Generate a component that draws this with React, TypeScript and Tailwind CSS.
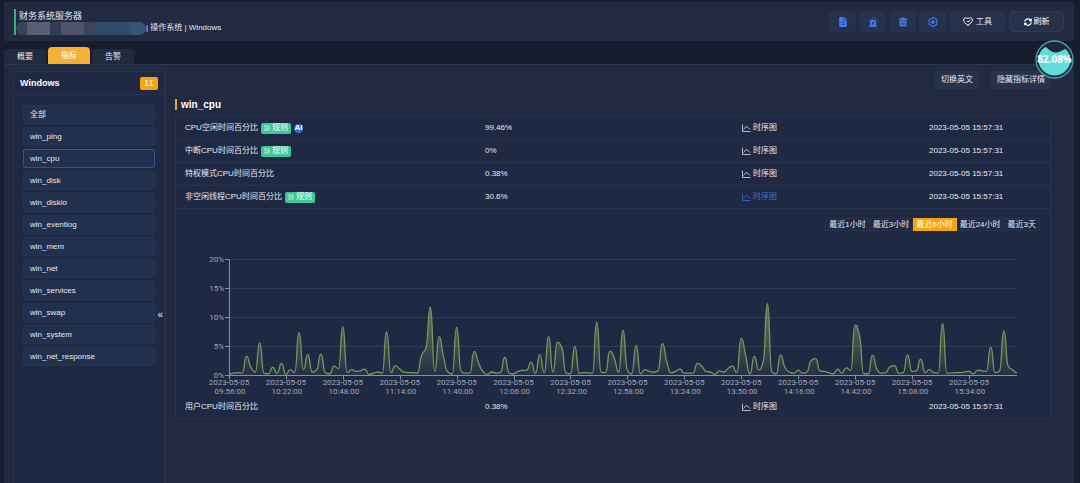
import type { ReactNode } from "react";
import { FaFileAlt, FaSyncAlt } from "react-icons/fa";

const metricGroups = [
  "全部",
  "win_ping",
  "win_cpu",
  "win_disk",
  "win_diskio",
  "win_eventlog",
  "win_mem",
  "win_net",
  "win_services",
  "win_swap",
  "win_system",
  "win_net_response",
];

interface Metric {
  name: string;
  value: string;
  time: string;
  rule?: boolean;
  ai?: boolean;
  open?: boolean;
}

const metrics: Metric[] = [
  { name: "CPU空闲时间百分比", value: "99.46%", time: "2023-05-05 15:57:31", rule: true, ai: true },
  { name: "中断CPU时间百分比", value: "0%", time: "2023-05-05 15:57:31", rule: true },
  { name: "特权模式CPU时间百分比", value: "0.38%", time: "2023-05-05 15:57:31" },
  { name: "非空闲线程CPU时间百分比", value: "30.6%", time: "2023-05-05 15:57:31", rule: true, open: true },
  { name: "用户CPU时间百分比", value: "0.38%", time: "2023-05-05 15:57:31" },
];

const ranges = ["最近1小时", "最近3小时", "最近6小时", "最近24小时", "最近3天"];

// one sample every two minutes, in percent
const samples = [
  0.3, 0.4, 0.5, 0.4, 3.3, 1.4, 0.6, 5.6, 0.4, 0.3, 1.4, 0.4, 2.1, 0.2, 1, 0.5, 7.4, 1, 3.6, 0.6,
  0.9, 3.7, 0.5, 0.3, 1.6, 1.2, 8.4, 0.5, 1, 0.7, 0.8, 1.1, 0.2, 0.4, 0.6, 0.4, 7.5, 0.5, 1.7, 1.1,
  0.6, 0.5, 0.5, 0.4, 3.5, 4.8, 11.8, 0.7, 6.7, 3.2, 0.6, 0.3, 8.3, 0.8, 0.4, 0.4, 4.1, 2.2, 0.7, 0.2,
  0.6, 0.4, 0.5, 3.1, 0.4, 0.3, 0.7, 0.9, 0.9, 2.3, 0.4, 3.6, 0.5, 6.7, 0.6, 5.7, 4.9, 0.4, 0.3, 5,
  0.4, 0.5, 0.5, 0.4, 9.2, 0.6, 0.5, 4.2, 3, 0.6, 7.8, 0.9, 0.3, 5.2, 0.3, 1, 0.7, 0.6, 0.8, 5.5,
  2.4, 0.5, 0.7, 1.1, 0.4, 0.4, 0.4, 2.1, 1.6, 0.7, 0.6, 0.2, 0.8, 0.6, 1.2, 1.6, 0.5, 6.4, 3.5, 0.3,
  3.3, 1, 2.3, 12.4, 0.6, 0.3, 3.5, 1.4, 0.6, 0.4, 0.9, 0.4, 0.6, 2.6, 2.9, 0.8, 0.7, 0.5, 0.3, 1.1,
  0.4, 1.3, 0.9, 8.7, 7, 0.3, 0.3, 3.5, 1.1, 0.4, 0.5, 1.5, 1.7, 0.4, 0.5, 3.5, 0.7, 0.8, 2.8, 0.5,
  1, 0.5, 0.4, 9, 0.4, 0.4, 0.5, 0.5, 0.6, 0.7, 0.3, 0.9, 0.8, 0.7, 4.9, 0.5, 0.8, 7.7, 1.6, 1, 0.5,
];

const xLabels = [
  "09:56:00", "10:22:00", "10:48:00", "11:14:00", "11:40:00", "12:06:00", "12:32:00",
  "12:58:00", "13:24:00", "13:50:00", "14:16:00", "14:42:00", "15:08:00", "15:34:00",
];

const LEFT = 53;
const RIGHT = 841;
const TOP = 28.5;
const BOTTOM = 144.5;

const xAt = (i: number) => LEFT + ((RIGHT - LEFT) * i) / (samples.length - 1);
const yAt = (v: number) => BOTTOM - ((BOTTOM - TOP) * v) / 20;

function smoothLine(values: number[]) {
  const step = xAt(1) - xAt(0);
  const slope = values.map((v, i) => {
    const prev = values[i - 1];
    const next = values[i + 1];
    if (prev === undefined || next === undefined) return 0;
    const a = yAt(v) - yAt(prev);
    const b = yAt(next) - yAt(v);
    if (a * b <= 0) return 0;
    return (2 * a * b) / (a + b) / step;
  });
  const c = step * 0.6;
  let d = `M${xAt(0)},${yAt(values[0])}`;
  for (let i = 1; i < values.length; i++) {
    const x0 = xAt(i - 1);
    const x1 = xAt(i);
    const y0 = yAt(values[i - 1]);
    const y1 = yAt(values[i]);
    d += `C${x0 + c},${y0 + slope[i - 1] * c} ${x1 - c},${y1 - slope[i] * c} ${x1},${y1}`;
  }
  return d;
}

function CpuChart() {
  const line = smoothLine(samples);
  return (
    <svg viewBox="0 0 874 165" className="block w-full h-auto" role="img" aria-label="非空闲线程CPU时间百分比">
      <defs>
        <linearGradient id="area" gradientUnits="userSpaceOnUse" x1="0" y1="70" x2="0" y2={BOTTOM}>
          <stop offset="0" stopColor="#7fa05c" stopOpacity="0.7" />
          <stop offset="1" stopColor="#7fa05c" stopOpacity="0.05" />
        </linearGradient>
      </defs>
      {[0, 5, 10, 15, 20].map((v) => (
        <g key={v}>
          <path d={`M${LEFT},${yAt(v)}H${RIGHT}`} stroke={v === 0 ? "#8b90a0" : "#323b54"} />
          <path d={`M${LEFT - 4},${yAt(v)}H${LEFT}`} stroke="#8b90a0" />
          <text x={LEFT - 5} y={yAt(v) + 2} textAnchor="end" className="fill-[#a3a7b3] text-[8px]">
            {v}%
          </text>
        </g>
      ))}
      <path d={`M${LEFT + 0.5},${TOP}V${BOTTOM}`} stroke="#8b90a0" />
      {xLabels.map((label, i) => (
        <g key={label}>
          <path d={`M${Math.round(xAt(i * 13)) + 0.5},${BOTTOM}v4`} stroke="#8b90a0" />
          <text textAnchor="middle" className="fill-[#a3a7b3] text-[8px]">
            <tspan x={xAt(i * 13)} y={154}>2023-05-05</tspan>
            <tspan x={xAt(i * 13) + 1} y={163}>{label}</tspan>
          </text>
        </g>
      ))}
      <path d={`${line}V${BOTTOM}H${LEFT}Z`} fill="url(#area)" />
      <path d={line} fill="none" stroke="#76985a" strokeWidth="1.3" strokeLinejoin="round" />
    </svg>
  );
}

function TrendIcon() {
  return (
    <svg viewBox="0 0 18 16" className="w-[9px] h-2 shrink-0" fill="none" stroke="currentColor" strokeWidth="1.5">
      <path d="M1 1v14h16" />
      <path d="M3 11l5-6 4 2 4 4" />
    </svg>
  );
}

function SirenIcon() {
  return (
    <svg viewBox="0 0 20 20" className="w-[10px] h-[10px]" fill="currentColor">
      <path fillRule="evenodd" d="M4 17v-6a6 6 0 0 1 12 0v6h2v2.500H2V17zM10 9l-3 4h2v3h2v-3h2z" />
      <path
        d="M10 .5v2.500M4.500 2l1.300 2M15.500 2l-1.300 2M.8 6l2.200 1M19.200 6L17 7"
        stroke="currentColor"
        strokeWidth="1.8"
      />
    </svg>
  );
}

function TrashIcon() {
  return (
    <svg viewBox="0 0 20 20" className="w-[10px] h-[10px]" fill="currentColor">
      <path d="M6.500 1h7v2.500H19V6H1V3.500h5.500z" />
      <path fillRule="evenodd" d="M2.800 7h14.400l-.8 12H3.600zM7 10v6h1.800v-6zM11.200 10v6H13v-6z" />
    </svg>
  );
}

function NutIcon() {
  return (
    <svg viewBox="0 0 20 20" className="w-[10px] h-[10px]" fill="none" stroke="currentColor" strokeWidth="2.200">
      <path d="M10 1.200l7.700 4.400v8.800L10 18.800l-7.700-4.400V5.600z" strokeLinejoin="round" />
      <circle cx="10" cy="10" r="2.500" fill="currentColor" />
    </svg>
  );
}

function HeartIcon() {
  return (
    <svg viewBox="0 0 20 18" className="w-[10px] h-[9px]" fill="none" stroke="currentColor" strokeWidth="2" strokeLinecap="round" strokeLinejoin="round">
      <path d="M10 16.500C4 13 1.200 10 1.200 6A4.600 4.600 0 0 1 5.800 1.500C8 1.500 9 2.500 10 3.500c1-1 2-2 4.200-2A4.600 4.600 0 0 1 18.800 6c0 4-2.800 7-8.800 10.500z" />
      <path d="M9 9h3l2-2.500" />
    </svg>
  );
}

function IconButton({ label, children }: { label: string; children: ReactNode }) {
  return (
    <button
      type="button"
      aria-label={label}
      className="flex w-[27px] h-[21px] items-center justify-center rounded-sm bg-[#28314c] text-[#3d7ff5]"
    >
      {children}
    </button>
  );
}

function RuleTag() {
  return (
    <span className="flex h-[11px] items-center gap-0.5 rounded-xs bg-[#41c698] px-[3px] text-white">
      <svg viewBox="0 0 12 12" className="w-1.5 h-1.5" stroke="#c5f0e0" strokeWidth="1.500">
        <path d="M0 2h12M0 6h12M0 10h12" />
        <path d="M3 0v4M9 4v4M4 8v4" />
      </svg>
      规则
    </span>
  );
}

function MetricRow({ metric }: { metric: Metric }) {
  return (
    <tr className="h-[23px]">
      <td className="border-b border-[#2a3450] px-[9px]">
        <div className="flex items-center gap-[3px]">
          {metric.name}
          {metric.rule && <RuleTag />}
          {metric.ai && (
            <span className="flex w-[9px] h-[9px] items-center justify-center rounded-full bg-[#2e6de6] font-bold text-white">
              AI
            </span>
          )}
        </div>
      </td>
      <td className="border-b border-[#2a3450] px-[11px]">{metric.value}</td>
      <td className="border-b border-[#2a3450] px-[11px]">
        <button type="button" className={`flex items-center gap-0.5 ${metric.open ? "text-[#3470dc]" : ""}`}>
          <TrendIcon />
          时序图
        </button>
      </td>
      <td className="border-b border-[#2a3450] px-[11px] whitespace-nowrap">{metric.time}</td>
    </tr>
  );
}

function MetricTable() {
  return (
    <table className="w-full table-fixed border-separate border-spacing-0 border-x border-t border-[#2a3450] bg-[#202944] text-left">
      <colgroup>
        <col />
        <col className="w-[257px]" />
        <col className="w-[187px]" />
        <col className="w-[132px]" />
      </colgroup>
      <tbody>
        {metrics.slice(0, 4).map((m) => (
          <MetricRow key={m.name} metric={m} />
        ))}
        <tr>
          <td colSpan={4} className="p-0 pt-[9px]">
            <div className="flex justify-end pr-[10px]">
              {ranges.map((r) => (
                <button
                  key={r}
                  type="button"
                  className={`h-[13px] px-[3px] border-y border-r first:border-l ${
                    r === "最近6小时"
                      ? "border-[#f5a50f] bg-[#f5a50f] text-white"
                      : "border-[#293350]"
                  }`}
                >
                  {r}
                </button>
              ))}
            </div>
            <div className="font-[Roboto,sans-serif]">
              <CpuChart />
            </div>
          </td>
        </tr>
        <MetricRow metric={metrics[4]} />
      </tbody>
    </table>
  );
}

function Sidebar() {
  return (
    <aside className="relative flex w-[153px] shrink-0 flex-col rounded-t-sm border-x border-t border-[#293149] border-r-2 bg-[#202944]">
      <div className="flex h-[23px] items-center justify-between border-b border-[#283149] pl-1.5 pr-1.5">
        <h2 className="text-[9px] font-bold text-white">Windows</h2>
        <span className="flex w-[18px] h-[13px] items-center justify-center rounded-xs bg-[#f5a50f] text-[9px] text-white">
          11
        </span>
      </div>
      <ul className="flex flex-col gap-[3px] px-[9px] pt-[10px]">
        {metricGroups.map((name) => (
          <li key={name}>
            <button
              type="button"
              className={`block h-[19px] w-full rounded-xs border px-1.5 text-left ${
                name === "win_cpu" ? "border-[#2a5596] bg-[#22304f]" : "border-[#273451] bg-[#22304f]"
              }`}
            >
              {name}
            </button>
          </li>
        ))}
      </ul>
      <button type="button" aria-label="收起" className="absolute right-px top-[238px] text-[10px]">
        «
      </button>
    </aside>
  );
}

function UsageGauge() {
  return (
    <div className="absolute right-1.5 top-10 w-[39px] h-[39px]">
      <svg viewBox="0 0 39 39" className="w-full h-full">
        <circle cx="19.500" cy="19.500" r="18.500" fill="#1e2740" stroke="#4aa5aa" strokeWidth="1.300" />
        <path
          d="M10.500 7C13 8 16 12.500 20.500 12.500S27 10 30.500 9A16 16 0 0 1 35.500 19.500A16 16 0 0 1 3.500 19.500C3.500 14 6 9.500 10.500 7Z"
          fill="#63dada"
        />
      </svg>
      <span className="absolute inset-0 flex items-center justify-center pb-0.5 font-['Open_Sans',sans-serif] text-[10px] font-bold text-white">
        82.08%
      </span>
    </div>
  );
}

export default function App() {
  return (
    <div className="relative flex min-h-screen flex-col bg-[#171c2e] pl-1 pr-1.5 pt-0.5 font-['Liberation_Sans','Noto_Sans_CJK_SC',sans-serif] text-[8px] leading-[10px] text-[#e6e9f0]">
      <header className="flex h-[39px] items-center justify-between bg-[#222a42] px-[10px]">
        <div className="flex h-[26px] border-l-2 border-[#36b384]">
          <div className="flex flex-col justify-between">
            <h1 className="pl-[3px] pt-0.5 text-[9px] leading-[11px]">财务系统服务器</h1>
            <div className="flex items-center">
              {/* masked address */}
              <div className="flex h-[13px] w-[130px] overflow-hidden rounded-full">
                <span className="w-[11px] bg-[#38445a]" />
                <span className="w-[23px] bg-[#5a5e72]" />
                <span className="w-[11px] bg-[#343c53]" />
                <span className="w-[23px] bg-[#50546a]" />
                <span className="w-[12px] bg-[#3b445c]" />
                <span className="w-[34px] bg-[#304b6b]" />
                <span className="flex-1 bg-[#365576]" />
              </div>
              <p>| 操作系统 | Windows</p>
            </div>
          </div>
        </div>
        <div className="flex gap-[3px]">
          <IconButton label="报告">
            <FaFileAlt className="w-[10px] h-[10px]" />
          </IconButton>
          <IconButton label="告警">
            <SirenIcon />
          </IconButton>
          <IconButton label="删除">
            <TrashIcon />
          </IconButton>
          <IconButton label="设置">
            <NutIcon />
          </IconButton>
          <button type="button" className="flex w-[57px] h-[21px] items-center justify-center gap-[3px] rounded-sm bg-[#28314c]">
            <HeartIcon />
            工具
          </button>
          <button type="button" className="flex w-[55px] h-[21px] items-center justify-center gap-0.5 rounded-sm border border-[#303a56] bg-[#28314c] text-white">
            <FaSyncAlt className="w-2 h-2" />
            刷新
          </button>
        </div>
      </header>

      <nav className="mt-1.5 flex items-end gap-0.5">
        <button type="button" className="h-[15px] w-[42px] rounded-t-sm bg-[#222a42]">
          概要
        </button>
        <button type="button" className="h-[17px] w-[42px] rounded-t-sm bg-[#f5b033] text-white">
          指标
        </button>
        <button type="button" className="h-[15px] w-[42px] rounded-t-sm bg-[#222a42]">
          告警
        </button>
      </nav>

      <main className="flex flex-1 border-t border-[#2d3650] bg-[#222a42] pl-[9px] pr-[23px] pt-1.5">
        <Sidebar />
        <section className="flex-1 pl-[9px]">
          <div className="flex justify-end gap-3">
            <button type="button" className="h-[18px] rounded-xs bg-[#29324d] px-1.5">
              切换英文
            </button>
            <button type="button" className="h-[18px] rounded-xs bg-[#29324d] px-1.5">
              隐藏指标详情
            </button>
          </div>
          <h2 className="mb-1.5 mt-[10px] flex h-[11px] items-center border-l-2 border-[#f5a50f] pl-1 text-[10px] font-bold text-white">
            win_cpu
          </h2>
          <MetricTable />
        </section>
      </main>

      <UsageGauge />
    </div>
  );
}
